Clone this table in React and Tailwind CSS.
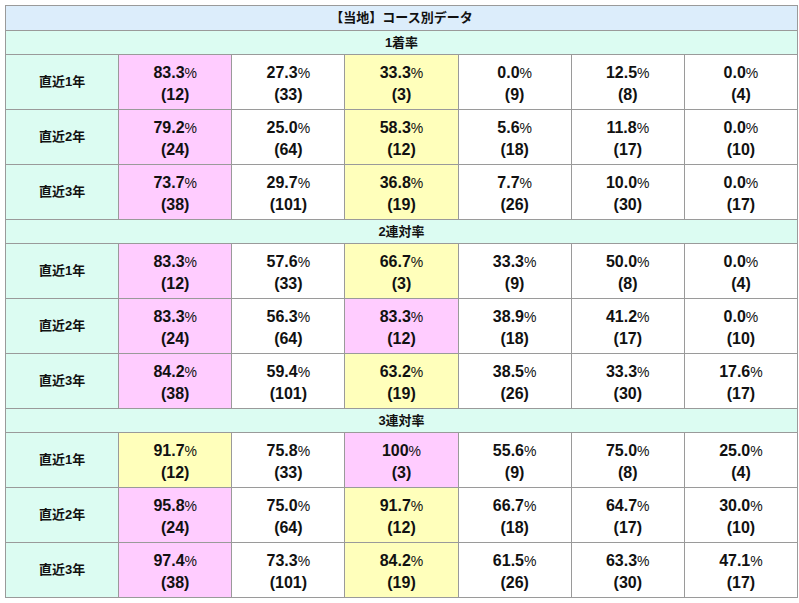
import React from "react";

const sections = [
  {
    label: "1着率",
    rows: [
      ["直近1年", [["83.3", "12", "p"], ["27.3", "33"], ["33.3", "3", "y"], ["0.0", "9"], ["12.5", "8"], ["0.0", "4"]]],
      ["直近2年", [["79.2", "24", "p"], ["25.0", "64"], ["58.3", "12", "y"], ["5.6", "18"], ["11.8", "17"], ["0.0", "10"]]],
      ["直近3年", [["73.7", "38", "p"], ["29.7", "101"], ["36.8", "19", "y"], ["7.7", "26"], ["10.0", "30"], ["0.0", "17"]]],
    ],
  },
  {
    label: "2連対率",
    rows: [
      ["直近1年", [["83.3", "12", "p"], ["57.6", "33"], ["66.7", "3", "y"], ["33.3", "9"], ["50.0", "8"], ["0.0", "4"]]],
      ["直近2年", [["83.3", "24", "p"], ["56.3", "64"], ["83.3", "12", "p"], ["38.9", "18"], ["41.2", "17"], ["0.0", "10"]]],
      ["直近3年", [["84.2", "38", "p"], ["59.4", "101"], ["63.2", "19", "y"], ["38.5", "26"], ["33.3", "30"], ["17.6", "17"]]],
    ],
  },
  {
    label: "3連対率",
    rows: [
      ["直近1年", [["91.7", "12", "y"], ["75.8", "33"], ["100", "3", "p"], ["55.6", "9"], ["75.0", "8"], ["25.0", "4"]]],
      ["直近2年", [["95.8", "24", "p"], ["75.0", "64"], ["91.7", "12", "y"], ["66.7", "18"], ["64.7", "17"], ["30.0", "10"]]],
      ["直近3年", [["97.4", "38", "p"], ["73.3", "101"], ["84.2", "19", "y"], ["61.5", "26"], ["63.3", "30"], ["47.1", "17"]]],
    ],
  },
];

function Cell({ rate, count, mark }) {
  const bg =
    mark === "p" ? "bg-[#ffccff]" : mark === "y" ? "bg-[#ffffbb]" : "bg-white";
  return (
    <div
      className={`${bg} h-[54px] pt-[3px] flex flex-col items-center justify-center text-[16px] font-bold leading-[21px] text-[#111]`}
    >
      <div>
        {rate}
        <span className="text-[14px] font-normal">%</span>
      </div>
      <div>({count})</div>
    </div>
  );
}

export default function App() {
  return (
    <div
      className="bg-white pt-[5px] pl-[5px] w-[799px] h-[603px]"
      style={{ fontFamily: '"Liberation Sans", "Noto Sans CJK JP", sans-serif' }}
    >
      <div className="w-[793px] grid grid-cols-7 gap-px p-px bg-[#9a9a9a]">
        <div className="col-span-7 h-[24px] bg-[#dcedfb] flex items-center justify-center text-[13px] font-bold text-[#111]">
          【当地】コース別データ
        </div>
        {sections.map((section) => (
          <React.Fragment key={section.label}>
            <div className="col-span-7 h-[23px] bg-[#dcfcf2] flex items-center justify-center text-[13px] font-bold text-[#111]">
              {section.label}
            </div>
            {section.rows.map(([label, cells]) => (
              <React.Fragment key={label}>
                <div className="h-[54px] bg-[#dcfcf2] flex items-center justify-center text-[13px] font-bold text-[#111]">
                  {label}
                </div>
                {cells.map(([rate, count, mark], i) => (
                  <Cell key={i} rate={rate} count={count} mark={mark} />
                ))}
              </React.Fragment>
            ))}
          </React.Fragment>
        ))}
      </div>
    </div>
  );
}
